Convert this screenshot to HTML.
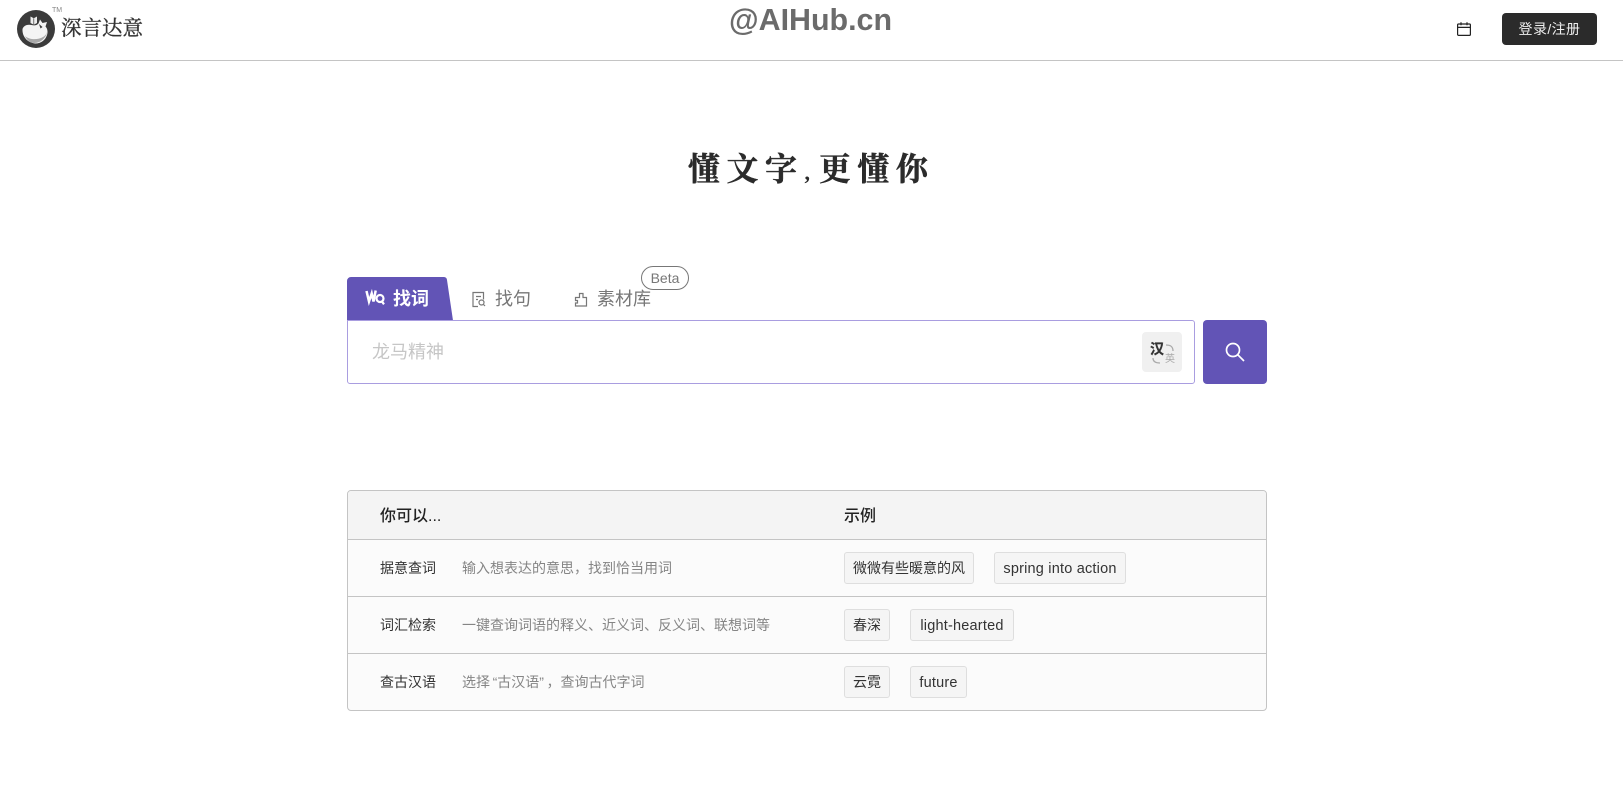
<!DOCTYPE html>
<html lang="zh"><head><meta charset="utf-8"><title>深言达意</title>
<style>
html,body{margin:0;padding:0;background:#fff}
body{width:1623px;height:806px;position:relative;overflow:hidden;font-family:"Liberation Sans","Noto Sans CJK SC",sans-serif;color:#333}
.a{position:absolute;white-space:nowrap}
.line{position:absolute;height:1px;background:#c4c4c4}
.tag{position:absolute;height:30px;line-height:30px;border:1px solid #dedede;border-radius:3px;background:#f5f5f5;font-size:14px;text-align:center;color:#333;box-sizing:content-box;white-space:nowrap}
.en{font-size:14.5px;letter-spacing:.2px;line-height:32px}
.lab{position:absolute;left:380px;font-size:14px;line-height:20px;color:#333;white-space:nowrap}
.desc{position:absolute;left:462px;font-size:14px;line-height:20px;color:#858585;white-space:nowrap}
.ql{padding-left:2.600px}
.qr{padding-right:2.600px}
</style></head><body>
<svg class="a" style="left:17px;top:10px" width="38" height="38" viewBox="0 0 38 38">
<circle cx="19" cy="19" r="19" fill="#3b3b3b"/>
<path d="M5.500 19c1-3.500 5-5 9-4 3 .8 5 .5 7-1.500l1.500-4 2.500 3.500 4.500-1-1.500 4.500c2 2 2.500 5.500 1.500 8.500-1.500 5-6 8.500-11.500 8.500C11 33 5 27 5.500 19z" fill="#f4f4f4"/>
<path d="M8 26c4 3.500 12 4.500 18 1 2-1 3.500-3 4-5-.5 5-6 11-12.500 11C13 33 10 30 8 26z" fill="#a8a8a8"/>
<path d="M13.500 6.500l3.300 1.800 3.200-1.800v6.500l-3.200 1.800-3.300-1.800z" fill="#eee"/>
<path d="M16.800 8.300v6.500" stroke="#3b3b3b" stroke-width=".7"/>
<path d="M22 14l3.500 3-2 1.500z" fill="#3b3b3b"/>
</svg>
<div class="a" style="left:52px;top:7px;font-size:7px;line-height:8px;color:#888">TM</div>
<div class="a" style="left:61px;top:15px;font-size:20.500px;line-height:28px;color:#333;-webkit-text-stroke:.35px #333;font-family:'Liberation Serif','Noto Serif CJK SC',serif">深言达意</div>
<div class="a" style="left:729px;top:2px;font-size:30.400px;line-height:36px;font-weight:700;color:#6b6b6b">@AIHub.cn</div>
<svg class="a" style="left:1456px;top:21px" width="16" height="16" viewBox="0 0 16 16" fill="none" stroke="#222" stroke-width="1.200"><rect x="1.600" y="3" width="12.800" height="11.400" rx="1"/><path d="M1.600 6.400h12.800M5 1.200v3M11 1.200v3"/></svg>
<div class="a" style="left:1502px;top:13px;width:95px;height:32px;line-height:32px;background:#2b2b2b;border-radius:4px;color:#eee;font-size:14px;letter-spacing:.4px;text-align:center">登录/注册</div>
<div class="line" style="left:0;top:60px;width:1623px"></div>

<div class="a" style="left:688px;top:146px;font-size:32px;line-height:46px;font-weight:700;color:#2b2b2b;letter-spacing:6.500px;-webkit-text-stroke:.5px #2b2b2b;font-family:'Liberation Serif','Noto Serif CJK SC',serif">懂文字<span style="font-size:22px;-webkit-text-stroke:0;letter-spacing:8.800px;margin-left:1px">,</span>更懂你</div>

<svg class="a" style="left:347px;top:277px" width="107" height="44" viewBox="0 0 107 44"><path d="M0 43.500V4a4 4 0 0 1 4-4h93a3 3 0 0 1 3 3l6 40.500z" fill="#6254b6"/></svg>
<svg class="a" style="left:365px;top:289px" width="21" height="18" viewBox="0 0 21 18" fill="none" stroke="#fff"><path d="M1.500 2l2.500 10.500 2.700-8 1.800 8 2.200-11" stroke-width="2.500"/><circle cx="15" cy="9.500" r="3.500" stroke-width="2.200"/><path d="M16.800 12.300l2.200 3" stroke-width="2.200"/></svg>
<div class="a" style="left:393px;top:286px;font-size:18px;line-height:26px;font-weight:700;color:#fff">找词</div>
<svg class="a" style="left:471px;top:291px" width="16" height="17" viewBox="0 0 16 17" fill="none" stroke="#777" stroke-width="1.200"><path d="M7 15.500H2V1.500h10.500v7M5 5.500h5M5 8.500h2"/><circle cx="10.500" cy="11.500" r="2.500"/><path d="M12.500 13.500l1.500 1.500"/></svg>
<div class="a" style="left:495px;top:286px;font-size:18px;line-height:26px;color:#777">找句</div>
<svg class="a" style="left:573px;top:291px" width="16" height="17" viewBox="0 0 16 17" fill="none" stroke="#777" stroke-width="1.200"><path d="M2.500 15h11V6.500h-3.500V2.500H6.500V6.500H2.500V9.500h2V12H2.500z"/></svg>
<div class="a" style="left:597px;top:286px;font-size:18px;line-height:26px;color:#777">素材库</div>
<div class="a" style="left:641px;top:266px;width:46px;height:22px;line-height:22px;border:1px solid #777;border-radius:12px;background:#fff;font-size:14px;text-align:center;color:#777">Beta</div>

<div class="a" style="left:347px;top:320px;width:846px;height:62px;border:1px solid #a99de0;border-radius:0 3px 3px 3px;background:#fff"></div>
<div class="a" style="left:372px;top:339px;font-size:18px;line-height:26px;color:#c6c6c6">龙马精神</div>
<div class="a" style="left:1142px;top:332px;width:40px;height:40px;background:#f0f0f0;border-radius:4px"></div>
<div class="a" style="left:1150px;top:340px;font-size:14px;line-height:18px;font-weight:700;color:#333;-webkit-text-stroke:.3px #333">汉</div>
<div class="a" style="left:1165px;top:354px;font-size:10px;line-height:12px;color:#aaa">英</div>
<svg class="a" style="left:1142px;top:332px" width="40" height="40" fill="none" stroke="#aaa" stroke-width="1.300"><path d="M24 13c4 0 7 1 7 6M11 26c0 3 2 5 7 5"/></svg>
<div class="a" style="left:1203px;top:320px;width:64px;height:64px;background:#6254b6;border-radius:4px"></div>
<svg class="a" style="left:1203px;top:320px" width="64" height="64" fill="none" stroke="#fff" stroke-width="1.700"><circle cx="30" cy="30" r="6.500"/><path d="M34.700 34.700l6.300 6.300"/></svg>

<div class="a" style="left:347px;top:490px;width:918px;height:219px;border:1px solid #c4c4c4;border-radius:4px;background:#fbfbfb;overflow:hidden">
<div style="height:48px;background:#f4f4f4"></div></div>
<div class="line" style="left:347px;top:539px;width:920px"></div>
<div class="line" style="left:347px;top:596px;width:920px"></div>
<div class="line" style="left:347px;top:653px;width:920px"></div>
<div class="a" style="left:380px;top:505px;font-size:16px;line-height:23px;font-weight:500;color:#222">你可以...</div>
<div class="a" style="left:844px;top:505px;font-size:16px;line-height:23px;font-weight:500;color:#222">示例</div>

<div class="lab" style="top:558px">据意查词</div><div class="desc" style="top:558px">输入想表达的意思，找到恰当用词</div>
<div class="lab" style="top:615px">词汇检索</div><div class="desc" style="top:615px">一键查询词语的释义、近义词、反义词、联想词等</div>
<div class="lab" style="top:672px">查古汉语</div><div class="desc" style="top:672px">选择<span class="ql">“</span>古汉语<span class="qr">”</span>，查询古代字词</div>

<div class="tag" style="left:844px;top:552px;width:128px">微微有些暖意的风</div>
<div class="tag en" style="left:994px;top:552px;width:130px">spring into action</div>
<div class="tag" style="left:844px;top:609px;width:44px">春深</div>
<div class="tag en" style="left:910px;top:609px;width:102px">light-hearted</div>
<div class="tag" style="left:844px;top:666px;width:44px">云霓</div>
<div class="tag en" style="left:910px;top:666px;width:55px">future</div>
</body></html>
